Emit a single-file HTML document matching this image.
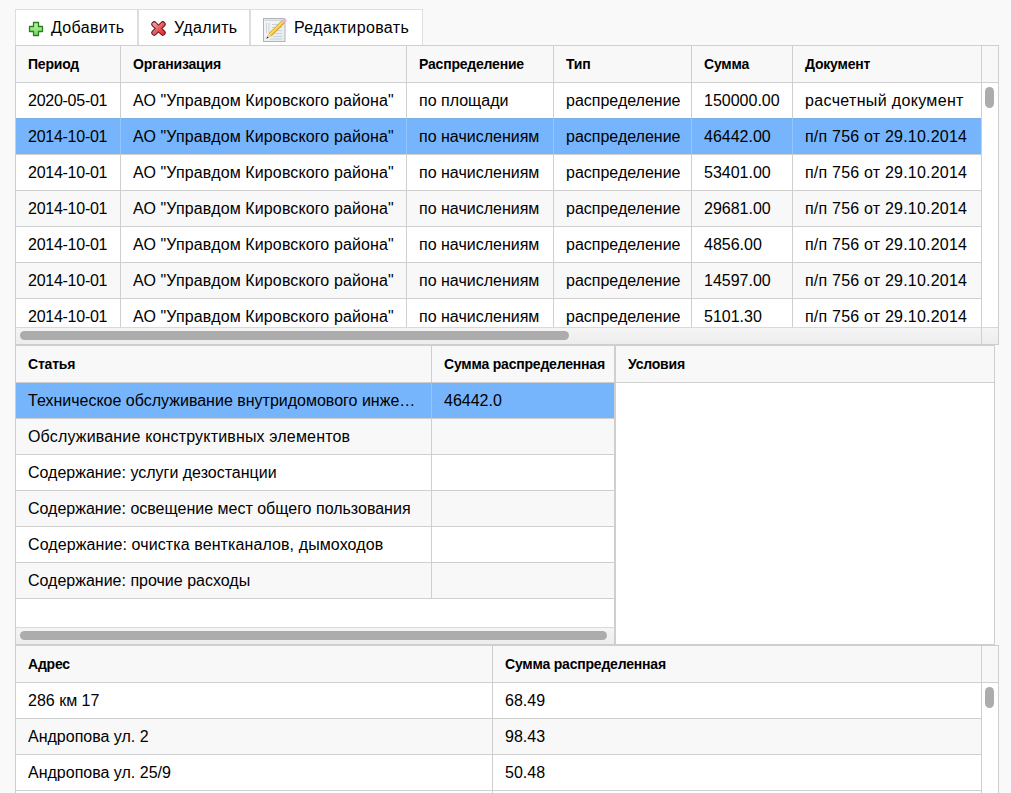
<!DOCTYPE html>
<html><head><meta charset="utf-8"><style>
html,body{margin:0;padding:0;}
body{width:1011px;height:793px;overflow:hidden;position:relative;background:#f9f9f9;font-family:"Liberation Sans",sans-serif;color:#000;}
body>div,body>span,body>svg{position:absolute;}
.body{font-size:16px;line-height:35px;white-space:nowrap;overflow:hidden;}
.hdr{font-size:14px;font-weight:bold;line-height:36px;white-space:nowrap;letter-spacing:-0.2px;}
.btn{font-size:16px;line-height:35px;white-space:nowrap;letter-spacing:0.35px;}
</style></head><body>
<div style="left:15px;top:9px;width:123px;height:37px;background:#fff;border:1px solid #dedede;box-sizing:border-box"></div>
<div style="left:138px;top:9px;width:112px;height:37px;background:#fff;border:1px solid #dedede;box-sizing:border-box"></div>
<div style="left:250px;top:9px;width:173px;height:37px;background:#fff;border:1px solid #dedede;box-sizing:border-box"></div>
<span class="btn" style="left:51px;top:10px;">Добавить</span>
<span class="btn" style="left:174px;top:10px;">Удалить</span>
<span class="btn" style="left:294px;top:10px;">Редактировать</span>
<svg style="left:28px;top:21px" width="16" height="16" viewBox="0 0 16 16">
<defs><linearGradient id="gp" x1="0" y1="0" x2="0" y2="1"><stop offset="0" stop-color="#bdf5a8"/><stop offset="1" stop-color="#6fd860"/></linearGradient></defs>
<path d="M5.5 1.5h5v4h4v5h-4v4h-5v-4h-4v-5h4z" fill="url(#gp)" stroke="#2a7d22" stroke-width="1.3" stroke-linejoin="round"/>
</svg>
<svg style="left:150px;top:20px" width="17" height="17" viewBox="0 0 17 17">
<defs><linearGradient id="gx" x1="0" y1="0" x2="1" y2="1"><stop offset="0" stop-color="#ec9a9a"/><stop offset="0.55" stop-color="#e8585e"/><stop offset="1" stop-color="#f0303a"/></linearGradient></defs>
<path d="M4.2 4.2L12.8 12.8M12.8 4.2L4.2 12.8" stroke="#5c1414" stroke-width="5.8" stroke-linecap="round"/>
<path d="M4.2 4.2L12.8 12.8M12.8 4.2L4.2 12.8" stroke="url(#gx)" stroke-width="3.8" stroke-linecap="round"/>
</svg>
<svg style="left:262px;top:17px" width="27" height="26" viewBox="0 0 27 26">
<defs><linearGradient id="gn" x1="0" y1="0" x2="1" y2="1"><stop offset="0" stop-color="#f6f7f9"/><stop offset="1" stop-color="#e6e9ee"/></linearGradient>
<linearGradient id="gpen" x1="0" y1="0" x2="0" y2="1"><stop offset="0" stop-color="#c89018"/><stop offset="0.35" stop-color="#ffe070"/><stop offset="0.7" stop-color="#f3c53a"/><stop offset="1" stop-color="#b98512"/></linearGradient></defs>
<rect x="1.5" y="1.5" width="21.5" height="23" fill="url(#gn)" stroke="#afb3b8" stroke-width="1"/>
<rect x="2.5" y="2.5" width="19.5" height="1.5" fill="#d3d7dc"/>
<g stroke="#c2cad4" stroke-width="0.8"><path d="M4.5 6v10M7 6v10M10 7.5h10M10 10.5h10M12 13.5h8M13 16.5h7M11 19.5h9M8 22h12"/></g>
<g transform="translate(4.2,21.8) rotate(-45)">
<polygon points="0,0 2.6,-0.9 2.6,0.9" fill="#1e1e1e"/>
<polygon points="2.6,-0.9 5.5,-2 5.5,2 2.6,0.9" fill="#efd39a"/>
<rect x="5.5" y="-2" width="18.5" height="4" fill="url(#gpen)"/>
<rect x="24" y="-2" width="1.2" height="4" fill="#c9b6c0"/>
<rect x="25.2" y="-2" width="2.3" height="4" fill="#eeb4da"/>
</g>
</svg>
<div style="left:15px;top:45px;width:984px;height:37px;background:#f8f8f8"></div>
<div style="left:15px;top:82px;width:984px;height:245px;background:#fff"></div>
<span class="body" style="left:28px;top:83px;letter-spacing:-0.26px;">2020-05-01</span>
<span class="body" style="left:133px;top:83px;letter-spacing:0.12px;">АО "Управдом Кировского района"</span>
<span class="body" style="left:419px;top:83px;">по площади</span>
<span class="body" style="left:566px;top:83px;">распределение</span>
<span class="body" style="left:704px;top:83px;">150000.00</span>
<span class="body" style="left:805px;top:83px;letter-spacing:0.34px;">расчетный документ</span>
<div style="left:16px;top:118px;width:965px;height:36px;background:#76b5fc"></div>
<div style="left:16px;top:118px;width:965px;height:1px;background:#7cafe6"></div>
<div style="left:15px;top:154px;width:967px;height:1px;background:#cfcfcf"></div>
<span class="body" style="left:28px;top:119px;letter-spacing:-0.26px;">2014-10-01</span>
<span class="body" style="left:133px;top:119px;letter-spacing:0.12px;">АО "Управдом Кировского района"</span>
<span class="body" style="left:419px;top:119px;">по начислениям</span>
<span class="body" style="left:566px;top:119px;">распределение</span>
<span class="body" style="left:704px;top:119px;">46442.00</span>
<span class="body" style="left:805px;top:119px;letter-spacing:0.21px;">п/п 756 от 29.10.2014</span>
<div style="left:15px;top:190px;width:967px;height:1px;background:#cfcfcf"></div>
<span class="body" style="left:28px;top:155px;letter-spacing:-0.26px;">2014-10-01</span>
<span class="body" style="left:133px;top:155px;letter-spacing:0.12px;">АО "Управдом Кировского района"</span>
<span class="body" style="left:419px;top:155px;">по начислениям</span>
<span class="body" style="left:566px;top:155px;">распределение</span>
<span class="body" style="left:704px;top:155px;">53401.00</span>
<span class="body" style="left:805px;top:155px;letter-spacing:0.21px;">п/п 756 от 29.10.2014</span>
<div style="left:16px;top:191px;width:965px;height:35px;background:#f8f8f8"></div>
<div style="left:15px;top:226px;width:967px;height:1px;background:#cfcfcf"></div>
<span class="body" style="left:28px;top:191px;letter-spacing:-0.26px;">2014-10-01</span>
<span class="body" style="left:133px;top:191px;letter-spacing:0.12px;">АО "Управдом Кировского района"</span>
<span class="body" style="left:419px;top:191px;">по начислениям</span>
<span class="body" style="left:566px;top:191px;">распределение</span>
<span class="body" style="left:704px;top:191px;">29681.00</span>
<span class="body" style="left:805px;top:191px;letter-spacing:0.21px;">п/п 756 от 29.10.2014</span>
<div style="left:15px;top:262px;width:967px;height:1px;background:#cfcfcf"></div>
<span class="body" style="left:28px;top:227px;letter-spacing:-0.26px;">2014-10-01</span>
<span class="body" style="left:133px;top:227px;letter-spacing:0.12px;">АО "Управдом Кировского района"</span>
<span class="body" style="left:419px;top:227px;">по начислениям</span>
<span class="body" style="left:566px;top:227px;">распределение</span>
<span class="body" style="left:704px;top:227px;">4856.00</span>
<span class="body" style="left:805px;top:227px;letter-spacing:0.21px;">п/п 756 от 29.10.2014</span>
<div style="left:16px;top:263px;width:965px;height:35px;background:#f8f8f8"></div>
<div style="left:15px;top:298px;width:967px;height:1px;background:#cfcfcf"></div>
<span class="body" style="left:28px;top:263px;letter-spacing:-0.26px;">2014-10-01</span>
<span class="body" style="left:133px;top:263px;letter-spacing:0.12px;">АО "Управдом Кировского района"</span>
<span class="body" style="left:419px;top:263px;">по начислениям</span>
<span class="body" style="left:566px;top:263px;">распределение</span>
<span class="body" style="left:704px;top:263px;">14597.00</span>
<span class="body" style="left:805px;top:263px;letter-spacing:0.21px;">п/п 756 от 29.10.2014</span>
<span class="body" style="left:28px;top:299px;letter-spacing:-0.26px;">2014-10-01</span>
<span class="body" style="left:133px;top:299px;letter-spacing:0.12px;">АО "Управдом Кировского района"</span>
<span class="body" style="left:419px;top:299px;">по начислениям</span>
<span class="body" style="left:566px;top:299px;">распределение</span>
<span class="body" style="left:704px;top:299px;">5101.30</span>
<span class="body" style="left:805px;top:299px;letter-spacing:0.21px;">п/п 756 от 29.10.2014</span>
<div style="left:16px;top:328px;width:982px;height:16px;background:linear-gradient(#f5f5f5,#ededed)"></div>
<div style="left:15px;top:327px;width:984px;height:1px;background:#d9d9d9"></div>
<div style="left:20px;top:331px;width:549px;height:9px;background:#acacac;border-radius:5px"></div>
<div style="left:15px;top:82px;width:984px;height:1px;background:#cfcfcf"></div>
<div style="left:120px;top:45px;width:1px;height:282px;background:#cfcfcf"></div>
<div style="left:406px;top:45px;width:1px;height:282px;background:#cfcfcf"></div>
<div style="left:553px;top:45px;width:1px;height:282px;background:#cfcfcf"></div>
<div style="left:691px;top:45px;width:1px;height:282px;background:#cfcfcf"></div>
<div style="left:792px;top:45px;width:1px;height:282px;background:#cfcfcf"></div>
<div style="left:120px;top:118px;width:1px;height:36px;background:#93c6fc"></div>
<div style="left:406px;top:118px;width:1px;height:36px;background:#93c6fc"></div>
<div style="left:553px;top:118px;width:1px;height:36px;background:#93c6fc"></div>
<div style="left:691px;top:118px;width:1px;height:36px;background:#93c6fc"></div>
<div style="left:792px;top:118px;width:1px;height:36px;background:#93c6fc"></div>
<div style="left:981px;top:45px;width:1px;height:300px;background:#cfcfcf"></div>
<div style="left:985px;top:87px;width:9px;height:21px;background:#acacac;border-radius:5px"></div>
<div style="left:15px;top:45px;width:984px;height:1px;background:#cfcfcf"></div>
<div style="left:15px;top:344px;width:984px;height:1px;background:#cfcfcf"></div>
<div style="left:15px;top:45px;width:1px;height:300px;background:#cfcfcf"></div>
<div style="left:998px;top:45px;width:1px;height:300px;background:#cfcfcf"></div>
<span class="hdr" style="left:28px;top:46px;">Период</span>
<span class="hdr" style="left:133px;top:46px;">Организация</span>
<span class="hdr" style="left:419px;top:46px;">Распределение</span>
<span class="hdr" style="left:566px;top:46px;">Тип</span>
<span class="hdr" style="left:704px;top:46px;">Сумма</span>
<span class="hdr" style="left:805px;top:46px;">Документ</span>
<div style="left:15px;top:345px;width:600px;height:37px;background:#f8f8f8"></div>
<div style="left:15px;top:382px;width:600px;height:245px;background:#fff"></div>
<div style="left:16px;top:382px;width:598px;height:36px;background:#76b5fc"></div>
<div style="left:16px;top:382px;width:598px;height:1px;background:#7cafe6"></div>
<div style="left:15px;top:418px;width:600px;height:1px;background:#cfcfcf"></div>
<span class="body" style="left:28px;top:383px;">Техническое обслуживание внутридомового инже…</span>
<span class="body" style="left:444px;top:383px;">46442.0</span>
<div style="left:16px;top:419px;width:598px;height:35px;background:#f8f8f8"></div>
<div style="left:15px;top:454px;width:600px;height:1px;background:#cfcfcf"></div>
<span class="body" style="left:28px;top:419px;letter-spacing:0.17px;">Обслуживание конструктивных элементов</span>
<span class="body" style="left:444px;top:419px;"></span>
<div style="left:15px;top:490px;width:600px;height:1px;background:#cfcfcf"></div>
<span class="body" style="left:28px;top:455px;">Содержание: услуги дезостанции</span>
<span class="body" style="left:444px;top:455px;"></span>
<div style="left:16px;top:491px;width:598px;height:35px;background:#f8f8f8"></div>
<div style="left:15px;top:526px;width:600px;height:1px;background:#cfcfcf"></div>
<span class="body" style="left:28px;top:491px;">Содержание: освещение мест общего пользования</span>
<span class="body" style="left:444px;top:491px;"></span>
<div style="left:15px;top:562px;width:600px;height:1px;background:#cfcfcf"></div>
<span class="body" style="left:28px;top:527px;letter-spacing:0.1px;">Содержание: очистка вентканалов, дымоходов</span>
<span class="body" style="left:444px;top:527px;"></span>
<div style="left:16px;top:563px;width:598px;height:35px;background:#f8f8f8"></div>
<div style="left:15px;top:598px;width:600px;height:1px;background:#cfcfcf"></div>
<span class="body" style="left:28px;top:563px;">Содержание: прочие расходы</span>
<span class="body" style="left:444px;top:563px;"></span>
<div style="left:16px;top:628px;width:598px;height:16px;background:linear-gradient(#f5f5f5,#ededed)"></div>
<div style="left:15px;top:627px;width:600px;height:1px;background:#d9d9d9"></div>
<div style="left:20px;top:631px;width:587px;height:9px;background:#acacac;border-radius:5px"></div>
<div style="left:15px;top:382px;width:600px;height:1px;background:#cfcfcf"></div>
<div style="left:431px;top:345px;width:1px;height:253px;background:#cfcfcf"></div>
<div style="left:431px;top:382px;width:1px;height:36px;background:#93c6fc"></div>
<div style="left:15px;top:345px;width:600px;height:1px;background:#cfcfcf"></div>
<div style="left:15px;top:644px;width:600px;height:1px;background:#cfcfcf"></div>
<div style="left:15px;top:345px;width:1px;height:300px;background:#cfcfcf"></div>
<div style="left:614px;top:345px;width:1px;height:300px;background:#cfcfcf"></div>
<span class="hdr" style="left:28px;top:346px;">Статья</span>
<span class="hdr" style="left:444px;top:346px;">Сумма распределенная</span>
<div style="left:615px;top:345px;width:380px;height:300px;background:#fff;border:1px solid #cfcfcf;box-sizing:border-box"></div>
<div style="left:616px;top:346px;width:378px;height:36px;background:#f8f8f8"></div>
<div style="left:615px;top:382px;width:380px;height:1px;background:#cfcfcf"></div>
<span class="hdr" style="left:628px;top:346px;">Условия</span>
<div style="left:15px;top:645px;width:984px;height:37px;background:#f8f8f8"></div>
<div style="left:15px;top:682px;width:984px;height:118px;background:#fff"></div>
<div style="left:15px;top:718px;width:967px;height:1px;background:#cfcfcf"></div>
<span class="body" style="left:28px;top:683px;">286 км 17</span>
<span class="body" style="left:505px;top:683px;">68.49</span>
<div style="left:16px;top:719px;width:965px;height:35px;background:#f8f8f8"></div>
<div style="left:15px;top:754px;width:967px;height:1px;background:#cfcfcf"></div>
<span class="body" style="left:28px;top:719px;">Андропова ул. 2</span>
<span class="body" style="left:505px;top:719px;">98.43</span>
<div style="left:15px;top:790px;width:967px;height:1px;background:#cfcfcf"></div>
<span class="body" style="left:28px;top:755px;">Андропова ул. 25/9</span>
<span class="body" style="left:505px;top:755px;">50.48</span>
<span class="body" style="left:28px;top:791px;"></span>
<span class="body" style="left:505px;top:791px;"></span>
<div style="left:15px;top:682px;width:984px;height:1px;background:#cfcfcf"></div>
<div style="left:492px;top:645px;width:1px;height:155px;background:#cfcfcf"></div>
<div style="left:981px;top:645px;width:1px;height:156px;background:#cfcfcf"></div>
<div style="left:985px;top:687px;width:9px;height:21px;background:#acacac;border-radius:5px"></div>
<div style="left:15px;top:645px;width:984px;height:1px;background:#cfcfcf"></div>
<div style="left:15px;top:800px;width:984px;height:1px;background:#cfcfcf"></div>
<div style="left:15px;top:645px;width:1px;height:156px;background:#cfcfcf"></div>
<div style="left:998px;top:645px;width:1px;height:156px;background:#cfcfcf"></div>
<span class="hdr" style="left:28px;top:646px;">Адрес</span>
<span class="hdr" style="left:505px;top:646px;">Сумма распределенная</span>
</body></html>
